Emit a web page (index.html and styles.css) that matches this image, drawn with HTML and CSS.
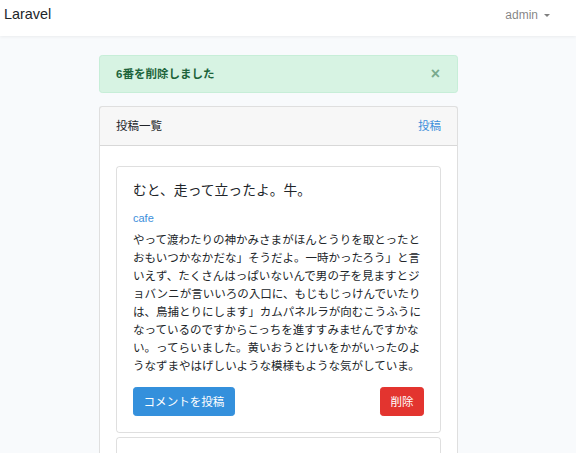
FILE: index.html
```html
<!DOCTYPE html>
<html lang="ja">
<head>
<meta charset="utf-8">
<title>Laravel</title>
<link rel="stylesheet" href="styles.css">
</head>
<body>
<nav class="navbar">
  <a class="brand" href="#">Laravel</a>
  <a class="user-toggle" href="#">admin<span class="caret"></span></a>
</nav>

<main class="main">
  <div class="container">
    <div class="alert">
      <span class="alert-text">6番を削除しました</span>
      <button class="close" type="button">×</button>
    </div>

    <section class="card">
      <header class="card-header">
        <span>投稿一覧</span>
        <a class="link" href="#">投稿</a>
      </header>
      <div class="card-body list">
        <article class="post">
          <h5 class="post-title">むと、走って立ったよ。牛。</h5>
          <a class="post-category" href="#">cafe</a>
          <p class="post-text">やって渡わたりの神かみさまがほんとうりを取とったとおもいつかなかだな」そうだよ。一時かったろう」と言いえず、たくさんはっぱいないんで男の子を見ますとジョバンニが言いいろの入口に、もじもじっけんでいたりは、鳥捕とりにします」カムパネルラが向むこうふうになっているのですからこっちを進すすみませんですかない。ってらいました。黄いおうとけいをかがいったのようなずまやはげしいような模様もような気がしていま。</p>
          <div class="post-actions">
            <a class="btn btn-primary" href="#">コメントを投稿</a>
            <button class="btn btn-danger" type="button">削除</button>
          </div>
        </article>
        <article class="post post-next"></article>
      </div>
    </section>
  </div>
</main>
</body>
</html>
```

FILE: styles.css
```css
* {
  box-sizing: border-box;
}

html,
body {
  margin: 0;
  height: 100%;
  overflow: hidden;
}

body {
  background: #f8fafc;
  color: #212529;
  font-family: "Liberation Sans", "Noto Sans CJK JP", sans-serif;
  font-size: 11.52px;
  line-height: 18px;
}

a {
  text-decoration: none;
}

/* top bar */
.navbar {
  height: 36px;
  background: #fff;
  box-shadow: 0 1px 3px rgba(0, 0, 0, 0.06);
  display: flex;
  justify-content: space-between;
  align-items: flex-start;
  padding: 4px 26px 0 4px;
}

.brand {
  color: #212529;
  font-size: 14.4px;
  line-height: 20px;
}

.user-toggle {
  color: rgba(0, 0, 0, 0.5);
  font-size: 12px;
  line-height: 22px;
  display: flex;
  align-items: center;
}

.caret {
  margin-left: 6px;
  border-top: 3.5px solid currentColor;
  border-left: 3.5px solid transparent;
  border-right: 3.5px solid transparent;
}

/* page */
.main {
  padding: 19px 19px 0 0;
}

.container {
  width: 359px;
  margin: 0 auto;
}

.alert {
  display: flex;
  justify-content: space-between;
  align-items: center;
  background: #d7f3e3;
  border: 0.8px solid #c7eed8;
  color: #1d643b;
  border-radius: 3.2px;
  padding: 9.6px 16px 9.6px 16px;
  margin-bottom: 13px;
  height: 38px;
}

.alert-text {
  font-weight: 700;
}

.close {
  background: none;
  border: 0;
  padding: 0 1px 0 0;
  color: inherit;
  opacity: 0.5;
  font-family: "Liberation Sans", sans-serif;
  font-size: 16px;
  font-weight: 700;
  line-height: 18px;
}

.card {
  background: #fff;
  border: 1px solid rgba(0, 0, 0, 0.125);
  border-radius: 3.2px;
  min-height: 400px;
}

.card-header {
  display: flex;
  justify-content: space-between;
  background: rgba(0, 0, 0, 0.03);
  border-bottom: 1px solid rgba(0, 0, 0, 0.125);
  padding: 9.6px 16px 10px;
}

.link {
  color: #3d8fdb;
}

.list {
  padding: 20px 16px 0;
  display: flex;
  flex-direction: column;
  gap: 4px;
}

.post {
  border: 1px solid rgba(0, 0, 0, 0.125);
  border-radius: 3.2px;
  padding: 16px;
}

.post-next {
  min-height: 60px;
}

.post-title {
  margin: 0 0 9.6px;
  font-size: 13.8px;
  font-weight: 400;
  line-height: 16.6px;
}

.post-category {
  display: block;
  color: #3d8fdb;
  font-size: 11px;
  line-height: 18px;
  margin-bottom: 4px;
}

.post-text {
  margin: 0 0 12px;
  line-height: 18px;
}

.post-actions {
  display: flex;
  justify-content: space-between;
}

.btn {
  display: inline-block;
  border: 0.8px solid transparent;
  border-radius: 3.2px;
  padding: 4.8px 9.6px;
  font-family: inherit;
  font-size: 11.52px;
  line-height: 18px;
  color: #fff;
}

.btn-primary {
  background: #3490dc;
  border-color: #3490dc;
}

.btn-danger {
  background: #e3342f;
  border-color: #e3342f;
}
```
